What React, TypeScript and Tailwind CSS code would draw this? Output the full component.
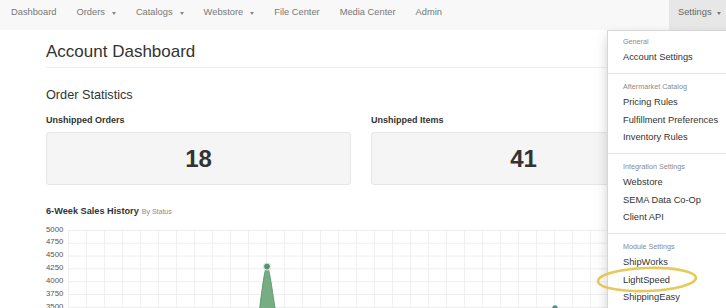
import React from "react";

const font = { fontFamily: '"Liberation Sans", Arial, Helvetica, sans-serif' };

function Caret() {
  return (
    <span className="ml-[7px] inline-block h-0 w-0 border-x-[2.5px] border-t-[3px] border-x-transparent border-t-[#888] align-middle" />
  );
}

function NavItem({ label, caret }: { label: string; caret?: boolean }) {
  return (
    <div className="flex h-[26px] items-center px-[10px] text-[9.3px] text-[#777]">
      <span>{label}</span>
      {caret && <Caret />}
    </div>
  );
}

function Header({ children }: { children: string }) {
  return (
    <div className="flex h-[15px] items-center px-[15px] text-[7.2px] text-[#8a8a8a]">{children}</div>
  );
}

function Item({ children }: { children: string }) {
  return (
    <div className="flex h-[17.5px] items-center whitespace-nowrap px-[15px] text-[9.3px] text-[#333]">{children}</div>
  );
}

function Divider() {
  return <div className="mb-[6px] mt-[5.5px] h-px bg-[#e5e5e5]" />;
}

function StatBox({ title, value }: { title: string; value: string }) {
  return (
    <div className="flex flex-col">
      <div className="mt-[11px] h-[12px] text-[9px] font-bold leading-[12px] text-[#333]">{title}</div>
      <div className="mt-[6px] flex h-[53px] items-center justify-center rounded-[3px] border border-[#e6e6e6] bg-[#f5f5f5] text-[24px] font-bold text-[#333]">
        {value}
      </div>
    </div>
  );
}

function Chart() {
  const labels = ["5000", "4750", "4500", "4250", "4000", "3750", "3500"];
  const vlines = Array.from({ length: 40 }, (_, i) => i * 18 + 0.5);
  const hlines = Array.from({ length: 7 }, (_, i) => 6.4 + i * 12.83);
  return (
    <div className="mt-[6.6px] flex">
      <div className="flex w-[22px] flex-col pr-[5px] text-right">
        {labels.map((l) => (
          <div key={l} className="h-[12.83px] text-[7.8px] leading-[12.83px] text-[#555]">
            {l}
          </div>
        ))}
      </div>
      <svg width="610" height="90" className="block">
        {vlines.map((x) => (
          <line key={x} x1={x} y1={6.4} x2={x} y2={90} stroke="#f0f0f0" strokeWidth="1" />
        ))}
        {hlines.map((y) => (
          <line key={y} x1={0} y1={y} x2={610} y2={y} stroke="#eeeeee" strokeWidth="1" />
        ))}
        <path
          d="M191 90 C194 66, 196.5 44, 199 42.5 C201.5 44, 204 66, 208 90 Z"
          fill="#76ad83"
          stroke="#5f9c6e"
          strokeWidth="1"
        />
        <circle cx="199" cy="42.4" r="4" fill="#d7e8e6" />
        <circle cx="199" cy="42.6" r="2.8" fill="#5b8f78" />
        <circle cx="487" cy="83.8" r="2.6" fill="#4f8f80" />
      </svg>
    </div>
  );
}

export default function App() {
  return (
    <div className="relative h-[308px] w-[726px] overflow-hidden bg-white" style={font}>
      {/* Navbar */}
      <div className="flex h-[30px] items-start bg-[#f8f8f8]">
        <div className="flex pl-px">
          <NavItem label="Dashboard" />
          <NavItem label="Orders" caret />
          <NavItem label="Catalogs" caret />
          <NavItem label="Webstore" caret />
          <NavItem label="File Center" />
          <NavItem label="Media Center" />
          <NavItem label="Admin" />
        </div>
        <div className="ml-auto flex h-[30px] w-[57px] items-start bg-[#e7e7e7]">
          <div className="flex h-[26px] items-center pl-[9px] text-[9.3px] text-[#666]">
            <span>Settings</span>
            <span className="ml-[5px] inline-block h-0 w-0 border-x-[2.5px] border-t-[3px] border-x-transparent border-t-[#777]" />
          </div>
        </div>
      </div>

      {/* Content */}
      <div className="ml-[46px] w-[630px]">
        <div className="mt-[12px] border-b border-[#eeeeee] pb-[5px]">
          <div className="h-[20px] text-[17px] leading-[20px] text-[#333]">Account Dashboard</div>
        </div>
        <div className="mt-[19px] h-[16px] text-[12.7px] leading-[16px] text-[#333]">Order Statistics</div>
        <div className="grid grid-cols-2 gap-[20px]">
          <StatBox title="Unshipped Orders" value="18" />
          <StatBox title="Unshipped Items" value="41" />
        </div>
        <div className="mt-[20px] flex h-[12px] items-baseline leading-[12px]">
          <span className="text-[9.2px] font-bold text-[#333]">6-Week Sales History</span>
          <span className="ml-[3px] text-[7px] text-[#888]">By Status</span>
        </div>
      </div>
      <div className="ml-[46px]">
        <Chart />
      </div>

      {/* Dropdown */}
      <div className="absolute left-[607px] top-[30px] w-[135px] border border-[#d6d6d6] bg-white pb-[6px] pt-[3.5px] shadow-[0_6px_12px_rgba(0,0,0,0.175)]">
        <Header>General</Header>
        <Item>Account Settings</Item>
        <Divider />
        <Header>Aftermarket Catalog</Header>
        <Item>Pricing Rules</Item>
        <Item>Fulfillment Preferences</Item>
        <Item>Inventory Rules</Item>
        <Divider />
        <Header>Integration Settings</Header>
        <Item>Webstore</Item>
        <Item>SEMA Data Co-Op</Item>
        <Item>Client API</Item>
        <Divider />
        <Header>Module Settings</Header>
        <Item>ShipWorks</Item>
        <Item>LightSpeed</Item>
        <Item>ShippingEasy</Item>
      </div>

      {/* Annotation ellipse */}
      <svg className="pointer-events-none absolute left-[590px] top-[260px]" width="120" height="40">
        <ellipse
          cx="57"
          cy="19.5"
          rx="49"
          ry="11.5"
          fill="none"
          stroke="#e2c13c"
          strokeOpacity="0.85"
          strokeWidth="2.6"
          transform="rotate(-2 57 19.5)"
        />
      </svg>
    </div>
  );
}
